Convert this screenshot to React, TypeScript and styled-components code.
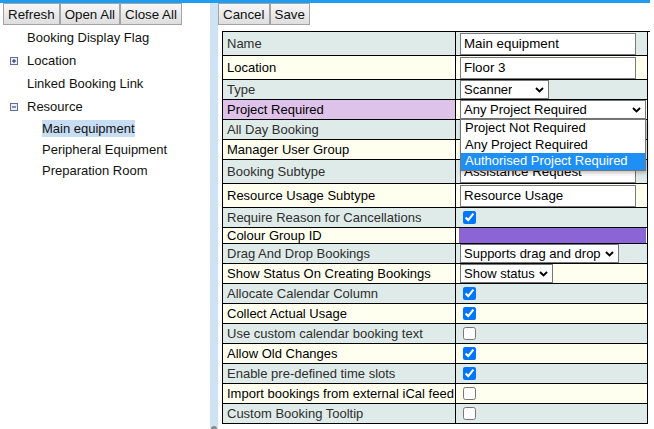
import { Fragment } from "react";
import styled, { createGlobalStyle } from "styled-components";

const GlobalStyle = createGlobalStyle`
  html, body {
    margin: 0;
    padding: 0;
    background: #fff;
  }
  body {
    font-family: "Liberation Sans", Arial, sans-serif;
    font-size: 13px;
    color: #111;
  }
`;

type Tone = "teal" | "cream" | "purple";

const toneBg: Record<Tone, string> = {
  teal: "#dfebe8",
  cream: "#fffff0",
  purple: "#dfc2ea",
};

const Page = styled.div`
  width: 650px;
  height: 100vh;
  border-top: 3px solid #1e9cf0;
  box-sizing: border-box;
  display: flex;
  overflow: hidden;
`;

const LeftPanel = styled.div`
  width: 210px;
  flex: none;
  padding-left: 3px;
  box-sizing: border-box;
`;

const Toolbar = styled.div`
  display: flex;
  height: 22px;
`;

const ToolButton = styled.button`
  height: 22px;
  padding: 0 4px;
  border: 1px solid #a3a3a3;
  border-radius: 0;
  background: linear-gradient(#f7f7f7, #dedede);
  font-family: "Liberation Sans", Arial, sans-serif;
  font-size: 13.33px;
  color: #111;
  margin: 0;
  cursor: pointer;
`;

const Tree = styled.ul`
  list-style: none;
  margin: 1px 0 0;
  padding: 0;
`;

const TreeRow = styled.li<{ $indent: number; $h: number }>`
  display: flex;
  align-items: center;
  height: ${(p) => p.$h}px;
  padding-left: ${(p) => p.$indent}px;
`;

const Toggle = styled.span`
  width: 17px;
  flex: none;
  display: flex;
  align-items: center;
`;

const TreeLabel = styled.span<{ $selected?: boolean }>`
  line-height: 17px;
  color: #111;
  background: ${(p) => (p.$selected ? "#c7ddf3" : "transparent")};
`;

const Splitter = styled.div`
  width: 8px;
  flex: none;
  background: #cfe2f3;
  display: flex;
  flex-direction: column;
  justify-content: flex-end;
  align-items: center;
`;

const Grip = styled.div`
  width: 6px;
  height: 3px;
  border-radius: 3px 3px 0 0;
  background: #8a8a8a;
`;

const RightPanel = styled.div`
  flex: 1;
  min-width: 0;
`;

const FormTable = styled.div`
  display: grid;
  grid-template-columns: 233px 192px;
  width: 428px;
  margin: 6px 0 0 4px;
  border-top: 1px solid #000;
  border-left: 1px solid #000;
`;

const LabelCell = styled.div<{ $tone: Tone; $h: number }>`
  height: ${(p) => p.$h - 1}px;
  display: flex;
  align-items: center;
  padding-left: 4px;
  background: ${(p) => toneBg[p.$tone]};
  color: ${(p) => (p.$tone === "teal" ? "#2e2e2e" : "#000")};
  border-right: 1px solid #000;
  border-bottom: 1px solid #000;
  white-space: nowrap;
  overflow: hidden;
`;

const ValueCell = styled.div<{ $tone: Tone; $h: number }>`
  height: ${(p) => p.$h - 1}px;
  display: flex;
  align-items: center;
  padding: 0 1px 0 4px;
  background: ${(p) => toneBg[p.$tone]};
  border-right: 1px solid #000;
  border-bottom: 1px solid #000;
`;

const TextInput = styled.input`
  width: 176px;
  height: 22px;
  box-sizing: border-box;
  margin: 0;
  padding: 0 3px;
  border: 1px solid #7a7a7a;
  border-radius: 0;
  background: #fff;
  font-family: "Liberation Sans", Arial, sans-serif;
  font-size: 13.33px;
  color: #000;
`;

const SelectWrap = styled.div`
  position: relative;
`;

const SelectBox = styled.div<{ $w: number }>`
  width: ${(p) => p.$w}px;
  height: 19px;
  box-sizing: border-box;
  border: 1px solid #767676;
  background: #fff;
  display: flex;
  align-items: center;
  justify-content: space-between;
  gap: 3px;
  padding: 0 4px 0 3px;
  font-size: 13px;
  color: #000;
  white-space: nowrap;

  span {
    overflow: hidden;
  }

  svg {
    flex: none;
  }
`;

const DropList = styled.ul`
  position: absolute;
  top: 100%;
  left: 0;
  right: 0;
  z-index: 10;
  margin: 0;
  padding: 0;
  list-style: none;
  background: #fff;
  border: 1px solid #767676;
  box-shadow: 1px 2px 4px rgba(0, 0, 0, 0.25);
`;

const DropOption = styled.li<{ $active?: boolean }>`
  height: 16.7px;
  line-height: 16.7px;
  padding-left: 4px;
  font-size: 13px;
  color: ${(p) => (p.$active ? "#fff" : "#000")};
  background: ${(p) => (p.$active ? "#1e8ff5" : "transparent")};
  white-space: nowrap;
`;

const Check = styled.input`
  width: 13px;
  height: 13px;
  margin: 0 0 0 3px;
`;

const ColourBar = styled.div<{ $color: string }>`
  flex: 1;
  align-self: stretch;
  margin-left: -1px;
  background: ${(p) => p.$color};
`;

const Chevron = () => (
  <svg width="9" height="6" viewBox="0 0 9 6">
    <path d="M1 1l3.5 3.5L8 1" fill="none" stroke="#000" strokeWidth="1.9" />
  </svg>
);

const ToggleIcon = ({ open }: { open: boolean }) => (
  <svg width="8" height="8" viewBox="0 0 8 8">
    <rect x="0.5" y="0.5" width="7" height="7" fill="#eef0fa" stroke="#5f6fa6" />
    <path d="M2 4h4" stroke="#1b2a77" />
    {!open && <path d="M4 2v4" stroke="#1b2a77" />}
  </svg>
);

type Field =
  | { kind: "text"; value: string }
  | { kind: "select"; value: string; width: number; options?: string[]; open?: boolean }
  | { kind: "check"; checked: boolean }
  | { kind: "colour"; color: string };

interface Row {
  label: string;
  h: number;
  field: Field;
  highlight?: boolean;
}

const rows: Row[] = [
  { label: "Name", h: 24, field: { kind: "text", value: "Main equipment" } },
  { label: "Location", h: 24, field: { kind: "text", value: "Floor 3" } },
  { label: "Type", h: 20, field: { kind: "select", value: "Scanner", width: 89 } },
  {
    label: "Project Required",
    h: 20,
    highlight: true,
    field: {
      kind: "select",
      value: "Any Project Required",
      width: 186,
      open: true,
      options: ["Project Not Required", "Any Project Required", "Authorised Project Required"],
    },
  },
  { label: "All Day Booking", h: 20, field: { kind: "check", checked: false } },
  { label: "Manager User Group", h: 20, field: { kind: "select", value: "", width: 120 } },
  { label: "Booking Subtype", h: 24, field: { kind: "text", value: "Assistance Request" } },
  { label: "Resource Usage Subtype", h: 24, field: { kind: "text", value: "Resource Usage" } },
  { label: "Require Reason for Cancellations", h: 20, field: { kind: "check", checked: true } },
  { label: "Colour Group ID", h: 16, field: { kind: "colour", color: "#8b64d6" } },
  { label: "Drag And Drop Bookings", h: 20, field: { kind: "select", value: "Supports drag and drop", width: 159 } },
  { label: "Show Status On Creating Bookings", h: 20, field: { kind: "select", value: "Show status", width: 93 } },
  { label: "Allocate Calendar Column", h: 20, field: { kind: "check", checked: true } },
  { label: "Collect Actual Usage", h: 20, field: { kind: "check", checked: true } },
  { label: "Use custom calendar booking text", h: 20, field: { kind: "check", checked: false } },
  { label: "Allow Old Changes", h: 20, field: { kind: "check", checked: true } },
  { label: "Enable pre-defined time slots", h: 20, field: { kind: "check", checked: true } },
  { label: "Import bookings from external iCal feed", h: 20, field: { kind: "check", checked: false } },
  { label: "Custom Booking Tooltip", h: 20, field: { kind: "check", checked: false } },
];

const tree = [
  { label: "Booking Display Flag", indent: 7, h: 23 },
  { label: "Location", indent: 7, h: 23, toggle: "closed" },
  { label: "Linked Booking Link", indent: 7, h: 23 },
  { label: "Resource", indent: 7, h: 23, toggle: "open" },
  { label: "Main equipment", indent: 22, h: 21, selected: true },
  { label: "Peripheral Equipment", indent: 22, h: 21 },
  { label: "Preparation Room", indent: 22, h: 21 },
];

const FieldControl = ({ field }: { field: Field }) => {
  switch (field.kind) {
    case "text":
      return <TextInput defaultValue={field.value} />;
    case "check":
      return <Check type="checkbox" defaultChecked={field.checked} />;
    case "colour":
      return <ColourBar $color={field.color} />;
    case "select":
      return (
        <SelectWrap>
          <SelectBox $w={field.width}>
            <span>{field.value}</span>
            <Chevron />
          </SelectBox>
          {field.open && field.options && (
            <DropList>
              {field.options.map((o, i) => (
                <DropOption key={o} $active={i === field.options!.length - 1}>
                  {o}
                </DropOption>
              ))}
            </DropList>
          )}
        </SelectWrap>
      );
  }
};

const App = () => (
  <>
    <GlobalStyle />
    <Page>
      <LeftPanel>
        <Toolbar>
          <ToolButton>Refresh</ToolButton>
          <ToolButton>Open All</ToolButton>
          <ToolButton>Close All</ToolButton>
        </Toolbar>
        <Tree>
          {tree.map((t) => (
            <TreeRow key={t.label} $indent={t.indent} $h={t.h}>
              <Toggle>{t.toggle && <ToggleIcon open={t.toggle === "open"} />}</Toggle>
              <TreeLabel $selected={t.selected}>{t.label}</TreeLabel>
            </TreeRow>
          ))}
        </Tree>
      </LeftPanel>
      <Splitter>
        <Grip />
      </Splitter>
      <RightPanel>
        <Toolbar>
          <ToolButton>Cancel</ToolButton>
          <ToolButton>Save</ToolButton>
        </Toolbar>
        <FormTable>
          {rows.map((r, i) => {
            const tone: Tone = i % 2 === 0 ? "teal" : "cream";
            return (
              <Fragment key={r.label}>
                <LabelCell $tone={r.highlight ? "purple" : tone} $h={r.h}>
                  {r.label}
                </LabelCell>
                <ValueCell $tone={tone} $h={r.h}>
                  <FieldControl field={r.field} />
                </ValueCell>
              </Fragment>
            );
          })}
        </FormTable>
      </RightPanel>
    </Page>
  </>
);

export default App;
